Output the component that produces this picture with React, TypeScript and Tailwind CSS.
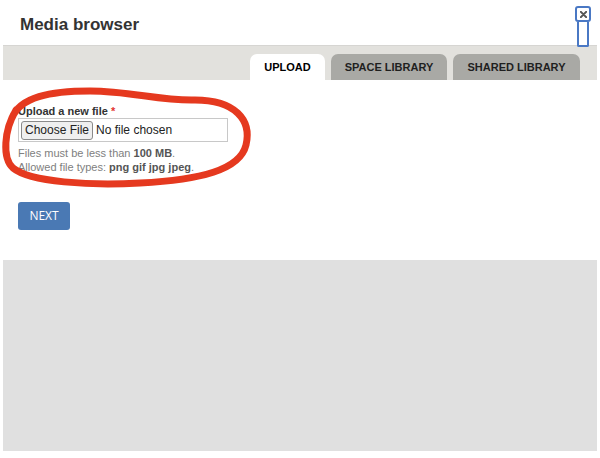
import React from 'react';

const sans = { fontFamily: '"Liberation Sans", Arial, sans-serif' };

function Tab({ label, active, width }: { label: string; active?: boolean; width: string }) {
  return (
    <div
      className={`${width} h-[26px] rounded-t-[7px] flex items-center justify-center text-[11px] font-bold ${
        active ? 'bg-white text-black' : 'bg-[#a9a9a5] text-[#1f1f1f]'
      }`}
    >
      {label}
    </div>
  );
}

export default function App() {
  return (
    <div className="relative w-[600px] h-[458px] bg-white overflow-hidden text-[#333]" style={sans}>
      {/* header */}
      <div className="h-[45px] flex items-center px-[20px] pt-[5px]">
        <h1 className="text-[17px] font-bold text-[#333]">Media browser</h1>
      </div>

      {/* close button */}
      <div className="absolute left-[575px] top-[6px] w-[16px] h-[16px] rounded-[3px] border-2 border-[#4a78c4] bg-white flex items-center justify-center">
        <svg width="7" height="7" viewBox="0 0 8 8">
          <path d="M1 1 L7 7 M7 1 L1 7" stroke="#555" strokeWidth="2.4" strokeLinecap="round" />
        </svg>
      </div>
      <div className="absolute left-[577px] top-[22px] w-[12px] h-[25px] border-2 border-t-0 border-[#4a78c4] rounded-b-[2px]" />

      {/* tab band */}
      <div className="mx-[3px] h-[35px] bg-[#e2e1dd] border-t border-[#d6d5d2] flex items-end justify-end gap-[6px] pr-[17px]">
        <Tab label="UPLOAD" active width="w-[75px]" />
        <Tab label="SPACE LIBRARY" width="w-[116px]" />
        <Tab label="SHARED LIBRARY" width="w-[127px]" />
      </div>

      {/* upload form */}
      <div className="relative h-[180px] px-[18px] pt-[24px]">
        <div className="text-[11px] leading-[14px] font-bold text-[#333]">
          Upload a new file <span className="text-[#e3342f]">*</span>
        </div>
        <div className="w-[210px] h-[24px] border border-[#c8c8c8] flex items-center pl-[2px] gap-[3px] text-[12px] text-[#222]">
          <div className="h-[19px] px-[3px] flex items-center bg-[#efefef] border border-[#8a8a8a] rounded-[3px]">
            Choose File
          </div>
          <span>No file chosen</span>
        </div>
        <div className="mt-[4px] text-[11px] leading-[14px] text-[#808080]">
          Files must be less than <strong className="text-[#555]">100 MB</strong>.
        </div>
        <div className="text-[11px] leading-[14px] text-[#808080]">
          Allowed file types: <strong className="text-[#555]">png gif jpg jpeg</strong>.
        </div>
        <button
          className="mt-[28px] w-[52px] h-[28px] rounded-[3px] bg-[#4a79b4] text-white text-[12px] font-medium"
          style={{ fontFamily: '"Open Sans", sans-serif' }}
        >
          NEXT
        </button>

        {/* hand-drawn annotation */}
        <svg className="absolute left-0 top-0 pointer-events-none" width="260" height="120" viewBox="0 80 260 120">
          <path
            d="M12 118 C20 97 50 91 90 91 C130 91 160 101 195 100 C235 100 252 120 246 145 C240 170 200 180 140 183 C90 186 30 182 13 168 C2 158 4 130 16 110"
            fill="none"
            stroke="#e5391f"
            strokeWidth="7"
            strokeLinecap="round"
          />
        </svg>
      </div>

      {/* empty library area */}
      <div className="mx-[3px] h-[191px] bg-[#e0e0e0]" />
    </div>
  );
}
